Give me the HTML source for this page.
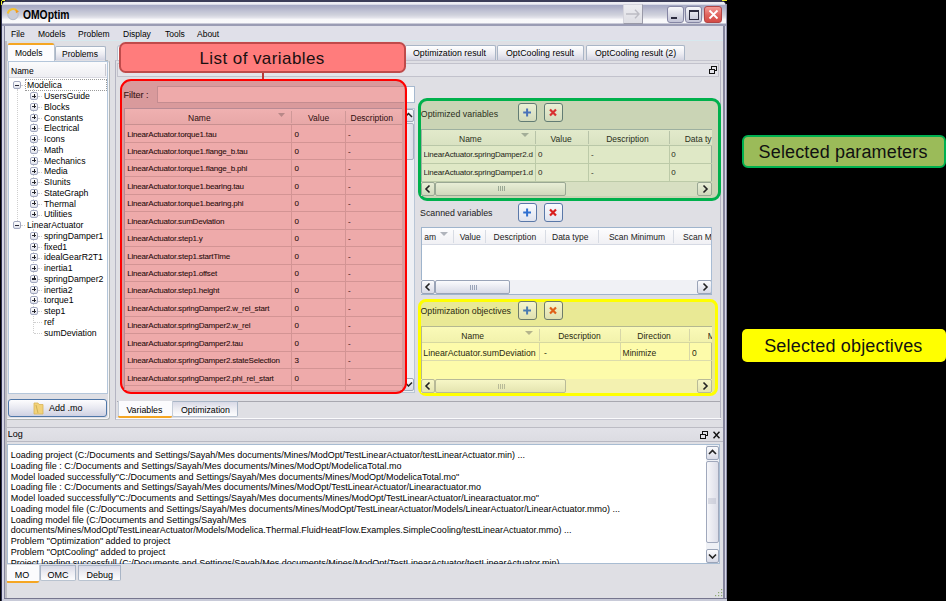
<!DOCTYPE html>
<html><head><meta charset="utf-8">
<style>
*{box-sizing:border-box;margin:0;padding:0}
html,body{width:946px;height:601px;overflow:hidden;background:#000}
body{position:relative;font-family:"Liberation Sans",sans-serif;color:#000}
.a{position:absolute}
.t{position:absolute;white-space:nowrap;font-size:8.5px;line-height:10px;color:#000}
.tab{position:absolute;border:1px solid #a9b5c6;border-bottom:none;background:linear-gradient(#ffffff,#ececf2 55%,#d3d4e2);border-radius:2px 2px 0 0}
.tabsel{position:absolute;border:1px solid #b9c3d0;border-bottom:none;background:#fcfcfe;border-radius:3px 3px 0 0}
.pm{position:absolute;width:8px;height:8px;border:1px solid #a2a8c0;border-radius:2px;background:linear-gradient(#fff,#dfe1ea)}
.pm:before{content:"";position:absolute;left:1px;top:2.5px;width:4px;height:1.2px;background:#2a2a38}
.pm.p:after{content:"";position:absolute;left:2.5px;top:0.5px;width:1px;height:4px;background:#222}
.dl{position:absolute;border-left:1px dotted #cfcfcf;width:0}
.dh{position:absolute;border-top:1px dotted #cfcfcf;height:0}
</style></head><body>
<!-- window frame -->
<div class="a" style="left:1px;top:0;width:726px;height:601px;background:#3a3c58;border-radius:7px 7px 0 0"></div>
<div class="a" style="left:2px;top:1px;width:724px;height:600px;background:#d6d6e6;border-radius:6px 6px 0 0"></div>
<div class="a" style="left:4px;top:2px;width:721px;height:597px;background:#84849c;border-radius:5px 5px 0 0"></div>
<div class="a" style="left:726px;top:4px;width:1px;height:597px;background:#9090a8"></div>
<div class="a" style="left:2px;top:599px;width:724px;height:2px;background:#c8cad8"></div>
<div class="a" style="left:5px;top:2px;width:718px;height:596px;background:#dfdfe4;border-radius:5px 5px 0 0"></div>
<!-- title bar -->
<div class="a" style="left:2px;top:0px;width:724px;height:26px;border-radius:7px 7px 0 0;background:linear-gradient(#3a3c58 0,#3a3c58 1.5px,#ececf2 2.2px,#eeeef4 4.2px,#a4a8c4 5.2px,#b0b2c8 8px,#c0c2d4 11px,#d0d2dc 15px,#e2e2ea 17.5px,#f8f8fa 19.5px,#fafafc 23px,#9a9cb4 24px,#9a9cb4 25.6px,#e2e4ec 26px)"></div>
<div class="a" style="left:1px;top:0;width:1px;height:601px;background:#2e3050"></div>
<!-- app icon -->
<svg class="a" style="left:6px;top:7px" width="14" height="14" viewBox="0 0 14 14">
  <circle cx="7" cy="7.5" r="5.2" fill="#c9ccd8" stroke="#b5bccb" stroke-width="1"/>
  <path d="M1.8 6.5 A5.3 5.3 0 0 1 11.2 4.2" fill="none" stroke="#f5c12e" stroke-width="2"/>
  <path d="M9.5 2.5 L13 4.5 L10 6.2 Z" fill="#f39a1e"/>
</svg>
<div class="t" style="left:23px;top:8.8px;font-size:12px;line-height:13px;font-weight:bold;color:#000;transform:scaleX(0.86);transform-origin:0 0">OMOptim</div>
<!-- title buttons -->
<div class="a" style="left:623px;top:4px;width:20px;height:20px;background:linear-gradient(#ececf0,#dedee4);border:1px solid #d4d4dc;border-right-color:#9a9aa8;border-bottom-color:#9a9aa8"></div>
<svg class="a" style="left:625px;top:8px" width="16" height="12" viewBox="0 0 16 12"><path d="M1 6 H14 M10 1.8 L14 6 L10 10.2" stroke="#bcbcc4" stroke-width="1.4" fill="none"/></svg>
<div class="a" style="left:666.5px;top:6px;width:17px;height:17px;border:1px solid #8586a4;border-radius:3px;background:linear-gradient(#f8f8fb,#d6d7e3 60%,#c2c3d6)"></div>
<div class="a" style="left:670.5px;top:17px;width:6px;height:2px;background:#2c2c40"></div>
<div class="a" style="left:685.4px;top:6px;width:17px;height:17px;border:1px solid #8586a4;border-radius:3px;background:linear-gradient(#f8f8fb,#d6d7e3 60%,#c2c3d6)"></div>
<div class="a" style="left:689px;top:9.6px;width:10px;height:10px;border:1px solid #2c2c40;border-top-width:2px"></div>
<div class="a" style="left:704.4px;top:6px;width:17.4px;height:17px;border:1px solid #b04545;border-radius:3px;background:linear-gradient(#f39a95,#e0625c 55%,#d34a45)"></div>
<svg class="a" style="left:704.6px;top:6px" width="17" height="17" viewBox="0 0 17 17"><path d="M4.5 4.5 L12.5 12.5 M12.5 4.5 L4.5 12.5" stroke="#fff" stroke-width="1.8"/></svg>
<div class="a" style="left:2px;top:0;width:3px;height:1px;background:#ecec30"></div>
<div class="a" style="left:1px;top:1px;width:1px;height:4px;background:#ecec30"></div>
<div class="a" style="left:722px;top:0;width:5px;height:1.2px;background:#ecec30"></div>
<!-- menu bar -->
<div class="a" style="left:5px;top:26px;width:718px;height:15px;background:#e0e0e9;border-bottom:1px solid #d6e8ee"></div>
<div class="t" style="left:11px;top:29px">File</div>
<div class="t" style="left:38px;top:29px">Models</div>
<div class="t" style="left:78px;top:29px">Problem</div>
<div class="t" style="left:123px;top:29px">Display</div>
<div class="t" style="left:165px;top:29px">Tools</div>
<div class="t" style="left:197px;top:29px">About</div>
<!-- LEFT DOCK -->
<div class="tab" style="left:55px;top:45.7px;width:50.5px;height:14.3px"></div>
<div class="t" style="left:62px;top:49px">Problems</div>
<div class="tabsel" style="left:7px;top:43px;width:48px;height:18px"></div>
<div class="a" style="left:8px;top:43px;width:46px;height:2px;background:#f5a623;border-radius:2px 2px 0 0"></div>
<div class="t" style="left:15px;top:48px">Models</div>
<div class="a" style="left:5px;top:59.6px;width:105.4px;height:360.4px;border:1px solid #b2b6b6;border-top-color:transparent;border-radius:0 3px 3px 3px;box-shadow:inset -1px -1px 0 #f6f6f8"></div>
<div class="a" style="left:105px;top:59.6px;width:3px;height:1px;background:#b2b6b6"></div>
<div class="a" style="left:7.5px;top:61px;width:100.5px;height:333px;background:#fff;border:1px solid #b4c6da"></div>
<div class="a" style="left:9px;top:62px;width:98px;height:16px;background:linear-gradient(#fbfbfc,#eeeef2);border-bottom:1px solid #d8d8e0"></div>
<div class="a" style="left:105px;top:64px;width:1px;height:12px;background:#c8c8d0"></div>
<div class="t" style="left:11px;top:66px">Name</div>
<div class="dl" style="left:17px;top:89.4px;height:131.9px"></div>
<div class="dl" style="left:33px;top:89.4px;height:125.1px"></div>
<div class="dl" style="left:33px;top:229.3px;height:103.6px"></div>
<div class="pm" style="left:13px;top:81.2px"></div>
<div class="dh" style="left:21px;top:85.4px;width:4px"></div>
<div class="t" style="left:27px;top:80.2px;font-size:8.7px">Modelica</div>
<div class="pm p" style="left:30px;top:92.0px"></div>
<div class="dh" style="left:38px;top:96.2px;width:4px"></div>
<div class="t" style="left:44px;top:91.0px;font-size:8.7px">UsersGuide</div>
<div class="pm p" style="left:30px;top:102.7px"></div>
<div class="dh" style="left:38px;top:106.9px;width:4px"></div>
<div class="t" style="left:44px;top:101.7px;font-size:8.7px">Blocks</div>
<div class="pm p" style="left:30px;top:113.5px"></div>
<div class="dh" style="left:38px;top:117.7px;width:4px"></div>
<div class="t" style="left:44px;top:112.5px;font-size:8.7px">Constants</div>
<div class="pm p" style="left:30px;top:124.2px"></div>
<div class="dh" style="left:38px;top:128.4px;width:4px"></div>
<div class="t" style="left:44px;top:123.2px;font-size:8.7px">Electrical</div>
<div class="pm p" style="left:30px;top:135.0px"></div>
<div class="dh" style="left:38px;top:139.2px;width:4px"></div>
<div class="t" style="left:44px;top:134.0px;font-size:8.7px">Icons</div>
<div class="pm p" style="left:30px;top:145.8px"></div>
<div class="dh" style="left:38px;top:150.0px;width:4px"></div>
<div class="t" style="left:44px;top:144.8px;font-size:8.7px">Math</div>
<div class="pm p" style="left:30px;top:156.5px"></div>
<div class="dh" style="left:38px;top:160.7px;width:4px"></div>
<div class="t" style="left:44px;top:155.5px;font-size:8.7px">Mechanics</div>
<div class="pm p" style="left:30px;top:167.3px"></div>
<div class="dh" style="left:38px;top:171.5px;width:4px"></div>
<div class="t" style="left:44px;top:166.3px;font-size:8.7px">Media</div>
<div class="pm p" style="left:30px;top:178.0px"></div>
<div class="dh" style="left:38px;top:182.2px;width:4px"></div>
<div class="t" style="left:44px;top:177.0px;font-size:8.7px">SIunits</div>
<div class="pm p" style="left:30px;top:188.8px"></div>
<div class="dh" style="left:38px;top:193.0px;width:4px"></div>
<div class="t" style="left:44px;top:187.8px;font-size:8.7px">StateGraph</div>
<div class="pm p" style="left:30px;top:199.6px"></div>
<div class="dh" style="left:38px;top:203.8px;width:4px"></div>
<div class="t" style="left:44px;top:198.6px;font-size:8.7px">Thermal</div>
<div class="pm p" style="left:30px;top:210.3px"></div>
<div class="dh" style="left:38px;top:214.5px;width:4px"></div>
<div class="t" style="left:44px;top:209.3px;font-size:8.7px">Utilities</div>
<div class="pm" style="left:13px;top:221.1px"></div>
<div class="dh" style="left:21px;top:225.3px;width:4px"></div>
<div class="t" style="left:27px;top:220.1px;font-size:8.7px">LinearActuator</div>
<div class="pm p" style="left:30px;top:231.8px"></div>
<div class="dh" style="left:38px;top:236.0px;width:4px"></div>
<div class="t" style="left:44px;top:230.8px;font-size:8.7px">springDamper1</div>
<div class="pm p" style="left:30px;top:242.6px"></div>
<div class="dh" style="left:38px;top:246.8px;width:4px"></div>
<div class="t" style="left:44px;top:241.6px;font-size:8.7px">fixed1</div>
<div class="pm p" style="left:30px;top:253.4px"></div>
<div class="dh" style="left:38px;top:257.6px;width:4px"></div>
<div class="t" style="left:44px;top:252.4px;font-size:8.7px">idealGearR2T1</div>
<div class="pm p" style="left:30px;top:264.1px"></div>
<div class="dh" style="left:38px;top:268.3px;width:4px"></div>
<div class="t" style="left:44px;top:263.1px;font-size:8.7px">inertia1</div>
<div class="pm p" style="left:30px;top:274.9px"></div>
<div class="dh" style="left:38px;top:279.1px;width:4px"></div>
<div class="t" style="left:44px;top:273.9px;font-size:8.7px">springDamper2</div>
<div class="pm p" style="left:30px;top:285.6px"></div>
<div class="dh" style="left:38px;top:289.8px;width:4px"></div>
<div class="t" style="left:44px;top:284.6px;font-size:8.7px">inertia2</div>
<div class="pm p" style="left:30px;top:296.4px"></div>
<div class="dh" style="left:38px;top:300.6px;width:4px"></div>
<div class="t" style="left:44px;top:295.4px;font-size:8.7px">torque1</div>
<div class="pm p" style="left:30px;top:307.2px"></div>
<div class="dh" style="left:38px;top:311.4px;width:4px"></div>
<div class="t" style="left:44px;top:306.2px;font-size:8.7px">step1</div>
<div class="dh" style="left:34px;top:322.1px;width:8px"></div>
<div class="t" style="left:44px;top:316.9px;font-size:8.7px">ref</div>
<div class="dh" style="left:34px;top:332.9px;width:8px"></div>
<div class="t" style="left:44px;top:327.7px;font-size:8.7px">sumDeviation</div>
<div class="a" style="left:25px;top:79px;width:82px;height:12px;border:1px dotted #9a9a9a"></div>
<!-- Add .mo button -->
<div class="a" style="left:8px;top:399px;width:99px;height:18px;border:1px solid #4f77a8;border-radius:3px;background:linear-gradient(#fdfdfe,#e8e9f1 50%,#cfd1e2)"></div>
<svg class="a" style="left:33px;top:401px" width="12" height="14" viewBox="0 0 12 14"><path d="M1 2 H5 L6 3.5 H10 V13 H1 Z" fill="#f2d27a" stroke="#d9b558" stroke-width="0.8"/><path d="M3 4 L5 12" stroke="#b89a40" stroke-width="0.6"/></svg>
<div class="t" style="left:49px;top:403px;font-size:9px">Add .mo</div>

<div class="a" style="left:117px;top:45px;width:70px;height:16px;background:#fbfbfd;border:1px solid #b9c3d0;border-bottom:none;border-radius:3px 3px 0 0"></div>
<div class="tab" style="left:405px;top:45px;width:91px;height:15px"></div>
<div class="t" style="left:413px;top:48px;font-size:8.8px;color:#000;">Optimization result</div>
<div class="tab" style="left:497px;top:45px;width:87px;height:15px"></div>
<div class="t" style="left:506px;top:48px;font-size:8.8px;color:#000;">OptCooling result</div>
<div class="tab" style="left:586px;top:45px;width:99px;height:15px"></div>
<div class="t" style="left:595px;top:48px;font-size:8.8px;color:#000;">OptCooling result (2)</div>
<div class="a" style="left:115px;top:60px;width:605.5px;height:360px;border:1px solid #b4b4c2;border-bottom-color:#c8c8d2;border-top-color:#c4c4ce"></div>
<div class="a" style="left:117px;top:63px;width:602px;height:14px;border:1px solid #c2c2cc;background:#e4e4ea"></div>
<svg class="a" style="left:709px;top:66px" width="8" height="8" viewBox="0 0 8 8"><rect x="2.5" y="0.5" width="5" height="4" fill="#e4e4ea" stroke="#111" stroke-width="1"/><rect x="0.5" y="3.5" width="5" height="4" fill="#e4e4ea" stroke="#111" stroke-width="1"/></svg>
<div class="a" style="left:157px;top:86px;width:258px;height:17px;background:#fff;border:1px solid #a6b9cf"></div>
<div class="a" style="left:402px;top:108px;width:13px;height:285px;background:#eef0f4;border:1px solid #b9c6d6"></div>
<div class="a" style="left:403px;top:109px;width:11px;height:13px;background:linear-gradient(#fbfbfd,#d8dae6);border:1px solid #a0a8b8;border-radius:2px"></div>
<svg class="a" style="left:404px;top:112px" width="9" height="6" viewBox="0 0 9 6"><path d="M1 5 L4.5 1.5 L8 5" stroke="#222" stroke-width="1.5" fill="none"/></svg>
<div class="a" style="left:403px;top:123px;width:11px;height:37px;background:linear-gradient(90deg,#f4f4f8,#dcdde8);border:1px solid #a8b0c0;border-radius:2px"></div>
<div class="a" style="left:403px;top:378px;width:11px;height:13px;background:linear-gradient(#fbfbfd,#d8dae6);border:1px solid #a0a8b8;border-radius:2px"></div>
<svg class="a" style="left:404px;top:381px" width="9" height="6" viewBox="0 0 9 6"><path d="M1 1.5 L4.5 5 L8 1.5" stroke="#222" stroke-width="1.5" fill="none"/></svg>
<div class="a" style="left:119.5px;top:79px;width:287px;height:314.5px;background:#d99a9c;border:2.7px solid #ff0000;border-radius:11px"></div>
<div class="t" style="left:123.5px;top:90px;font-size:9px;color:#3a1414;-webkit-text-stroke:0.1px #3a1414">Filter :</div>
<div class="a" style="left:157px;top:86px;width:247px;height:17px;background:#eeaaaa;border:1px solid #c48c90;border-right:none"></div>
<div class="a" style="left:124px;top:108px;width:278px;height:282px;background:#eeaaaa;border:1px solid #b88a94;border-right:none;border-bottom:none"></div>
<div class="a" style="left:125px;top:109px;width:277px;height:16px;background:linear-gradient(#efb0b0,#e8a8a8);border-bottom:1px solid #c89090"></div>
<div class="a" style="left:291px;top:111px;width:1px;height:12px;background:#cf9898"></div>
<div class="a" style="left:344.5px;top:111px;width:1px;height:12px;background:#cf9898"></div>
<div class="t" style="left:188px;top:112.5px;font-size:8.5px;color:#2e0e0e;">Name</div>
<div class="t" style="left:308px;top:112.5px;font-size:8.5px;color:#2e0e0e;">Value</div>
<div class="t" style="left:350.5px;top:112.5px;font-size:8.5px;color:#2e0e0e;">Description</div>
<svg class="a" style="left:278px;top:113px" width="7" height="4" viewBox="0 0 7 4"><path d="M0 0 H7 L3.5 4 Z" fill="#b88888"/></svg>
<div class="a" style="left:125px;top:141.5px;width:277px;height:1px;background:#d39494"></div>
<div class="t" style="left:127.3px;top:129.6px;font-size:8px;color:#2a0c0c;letter-spacing:-0.2px;-webkit-text-stroke:0.08px #2a0c0c">LinearActuator.torque1.tau</div>
<div class="t" style="left:294.5px;top:129.6px;font-size:8px;color:#2a0c0c;-webkit-text-stroke:0.08px #2a0c0c">0</div>
<div class="t" style="left:348px;top:129.6px;font-size:8px;color:#2a0c0c;-webkit-text-stroke:0.08px #2a0c0c">-</div>
<div class="a" style="left:125px;top:158.9px;width:277px;height:1px;background:#d39494"></div>
<div class="t" style="left:127.3px;top:147.0px;font-size:8px;color:#2a0c0c;letter-spacing:-0.2px;-webkit-text-stroke:0.08px #2a0c0c">LinearActuator.torque1.flange_b.tau</div>
<div class="t" style="left:294.5px;top:147.0px;font-size:8px;color:#2a0c0c;-webkit-text-stroke:0.08px #2a0c0c">0</div>
<div class="t" style="left:348px;top:147.0px;font-size:8px;color:#2a0c0c;-webkit-text-stroke:0.08px #2a0c0c">-</div>
<div class="a" style="left:125px;top:176.4px;width:277px;height:1px;background:#d39494"></div>
<div class="t" style="left:127.3px;top:164.4px;font-size:8px;color:#2a0c0c;letter-spacing:-0.2px;-webkit-text-stroke:0.08px #2a0c0c">LinearActuator.torque1.flange_b.phi</div>
<div class="t" style="left:294.5px;top:164.4px;font-size:8px;color:#2a0c0c;-webkit-text-stroke:0.08px #2a0c0c">0</div>
<div class="t" style="left:348px;top:164.4px;font-size:8px;color:#2a0c0c;-webkit-text-stroke:0.08px #2a0c0c">-</div>
<div class="a" style="left:125px;top:193.8px;width:277px;height:1px;background:#d39494"></div>
<div class="t" style="left:127.3px;top:181.9px;font-size:8px;color:#2a0c0c;letter-spacing:-0.2px;-webkit-text-stroke:0.08px #2a0c0c">LinearActuator.torque1.bearing.tau</div>
<div class="t" style="left:294.5px;top:181.9px;font-size:8px;color:#2a0c0c;-webkit-text-stroke:0.08px #2a0c0c">0</div>
<div class="t" style="left:348px;top:181.9px;font-size:8px;color:#2a0c0c;-webkit-text-stroke:0.08px #2a0c0c">-</div>
<div class="a" style="left:125px;top:211.2px;width:277px;height:1px;background:#d39494"></div>
<div class="t" style="left:127.3px;top:199.3px;font-size:8px;color:#2a0c0c;letter-spacing:-0.2px;-webkit-text-stroke:0.08px #2a0c0c">LinearActuator.torque1.bearing.phi</div>
<div class="t" style="left:294.5px;top:199.3px;font-size:8px;color:#2a0c0c;-webkit-text-stroke:0.08px #2a0c0c">0</div>
<div class="t" style="left:348px;top:199.3px;font-size:8px;color:#2a0c0c;-webkit-text-stroke:0.08px #2a0c0c">-</div>
<div class="a" style="left:125px;top:228.6px;width:277px;height:1px;background:#d39494"></div>
<div class="t" style="left:127.3px;top:216.7px;font-size:8px;color:#2a0c0c;letter-spacing:-0.2px;-webkit-text-stroke:0.08px #2a0c0c">LinearActuator.sumDeviation</div>
<div class="t" style="left:294.5px;top:216.7px;font-size:8px;color:#2a0c0c;-webkit-text-stroke:0.08px #2a0c0c">0</div>
<div class="t" style="left:348px;top:216.7px;font-size:8px;color:#2a0c0c;-webkit-text-stroke:0.08px #2a0c0c">-</div>
<div class="a" style="left:125px;top:246.0px;width:277px;height:1px;background:#d39494"></div>
<div class="t" style="left:127.3px;top:234.1px;font-size:8px;color:#2a0c0c;letter-spacing:-0.2px;-webkit-text-stroke:0.08px #2a0c0c">LinearActuator.step1.y</div>
<div class="t" style="left:294.5px;top:234.1px;font-size:8px;color:#2a0c0c;-webkit-text-stroke:0.08px #2a0c0c">0</div>
<div class="t" style="left:348px;top:234.1px;font-size:8px;color:#2a0c0c;-webkit-text-stroke:0.08px #2a0c0c">-</div>
<div class="a" style="left:125px;top:263.5px;width:277px;height:1px;background:#d39494"></div>
<div class="t" style="left:127.3px;top:251.5px;font-size:8px;color:#2a0c0c;letter-spacing:-0.2px;-webkit-text-stroke:0.08px #2a0c0c">LinearActuator.step1.startTime</div>
<div class="t" style="left:294.5px;top:251.5px;font-size:8px;color:#2a0c0c;-webkit-text-stroke:0.08px #2a0c0c">0</div>
<div class="t" style="left:348px;top:251.5px;font-size:8px;color:#2a0c0c;-webkit-text-stroke:0.08px #2a0c0c">-</div>
<div class="a" style="left:125px;top:280.9px;width:277px;height:1px;background:#d39494"></div>
<div class="t" style="left:127.3px;top:269.0px;font-size:8px;color:#2a0c0c;letter-spacing:-0.2px;-webkit-text-stroke:0.08px #2a0c0c">LinearActuator.step1.offset</div>
<div class="t" style="left:294.5px;top:269.0px;font-size:8px;color:#2a0c0c;-webkit-text-stroke:0.08px #2a0c0c">0</div>
<div class="t" style="left:348px;top:269.0px;font-size:8px;color:#2a0c0c;-webkit-text-stroke:0.08px #2a0c0c">-</div>
<div class="a" style="left:125px;top:298.3px;width:277px;height:1px;background:#d39494"></div>
<div class="t" style="left:127.3px;top:286.4px;font-size:8px;color:#2a0c0c;letter-spacing:-0.2px;-webkit-text-stroke:0.08px #2a0c0c">LinearActuator.step1.height</div>
<div class="t" style="left:294.5px;top:286.4px;font-size:8px;color:#2a0c0c;-webkit-text-stroke:0.08px #2a0c0c">0</div>
<div class="t" style="left:348px;top:286.4px;font-size:8px;color:#2a0c0c;-webkit-text-stroke:0.08px #2a0c0c">-</div>
<div class="a" style="left:125px;top:315.7px;width:277px;height:1px;background:#d39494"></div>
<div class="t" style="left:127.3px;top:303.8px;font-size:8px;color:#2a0c0c;letter-spacing:-0.2px;-webkit-text-stroke:0.08px #2a0c0c">LinearActuator.springDamper2.w_rel_start</div>
<div class="t" style="left:294.5px;top:303.8px;font-size:8px;color:#2a0c0c;-webkit-text-stroke:0.08px #2a0c0c">0</div>
<div class="t" style="left:348px;top:303.8px;font-size:8px;color:#2a0c0c;-webkit-text-stroke:0.08px #2a0c0c">-</div>
<div class="a" style="left:125px;top:333.1px;width:277px;height:1px;background:#d39494"></div>
<div class="t" style="left:127.3px;top:321.2px;font-size:8px;color:#2a0c0c;letter-spacing:-0.2px;-webkit-text-stroke:0.08px #2a0c0c">LinearActuator.springDamper2.w_rel</div>
<div class="t" style="left:294.5px;top:321.2px;font-size:8px;color:#2a0c0c;-webkit-text-stroke:0.08px #2a0c0c">0</div>
<div class="t" style="left:348px;top:321.2px;font-size:8px;color:#2a0c0c;-webkit-text-stroke:0.08px #2a0c0c">-</div>
<div class="a" style="left:125px;top:350.6px;width:277px;height:1px;background:#d39494"></div>
<div class="t" style="left:127.3px;top:338.6px;font-size:8px;color:#2a0c0c;letter-spacing:-0.2px;-webkit-text-stroke:0.08px #2a0c0c">LinearActuator.springDamper2.tau</div>
<div class="t" style="left:294.5px;top:338.6px;font-size:8px;color:#2a0c0c;-webkit-text-stroke:0.08px #2a0c0c">0</div>
<div class="t" style="left:348px;top:338.6px;font-size:8px;color:#2a0c0c;-webkit-text-stroke:0.08px #2a0c0c">-</div>
<div class="a" style="left:125px;top:368.0px;width:277px;height:1px;background:#d39494"></div>
<div class="t" style="left:127.3px;top:356.1px;font-size:8px;color:#2a0c0c;letter-spacing:-0.2px;-webkit-text-stroke:0.08px #2a0c0c">LinearActuator.springDamper2.stateSelection</div>
<div class="t" style="left:294.5px;top:356.1px;font-size:8px;color:#2a0c0c;-webkit-text-stroke:0.08px #2a0c0c">3</div>
<div class="t" style="left:348px;top:356.1px;font-size:8px;color:#2a0c0c;-webkit-text-stroke:0.08px #2a0c0c">-</div>
<div class="a" style="left:125px;top:385.4px;width:277px;height:1px;background:#d39494"></div>
<div class="t" style="left:127.3px;top:373.5px;font-size:8px;color:#2a0c0c;letter-spacing:-0.2px;-webkit-text-stroke:0.08px #2a0c0c">LinearActuator.springDamper2.phi_rel_start</div>
<div class="t" style="left:294.5px;top:373.5px;font-size:8px;color:#2a0c0c;-webkit-text-stroke:0.08px #2a0c0c">0</div>
<div class="t" style="left:348px;top:373.5px;font-size:8px;color:#2a0c0c;-webkit-text-stroke:0.08px #2a0c0c">-</div>
<div class="a" style="left:291px;top:125px;width:1px;height:265px;background:#d39494"></div>
<div class="a" style="left:344.5px;top:125px;width:1px;height:265px;background:#d39494"></div>
<div class="a" style="left:119.3px;top:41.6px;width:286.8px;height:31.6px;background:#ff7c7c;border:2px solid #bf4b4b;border-radius:6.5px"></div>
<div class="t" style="left:199.5px;top:48.6px;font-size:17px;color:#1a1010;line-height:20px;letter-spacing:0.42px">List of variables</div>
<div class="a" style="left:262px;top:73px;width:2px;height:6px;background:#b83a3a"></div><div class="a" style="left:417.5px;top:97.7px;width:303px;height:103px;background:#cad4b5;border:3px solid #00b04c;border-radius:9px"></div>
<div class="t" style="left:420.8px;top:108.5px;font-size:8.8px;color:#2a3020;">Optimized variables</div>
<div class="a" style="left:518px;top:103px;width:19px;height:19px;border:1.5px solid #627c74;border-radius:3px;background:linear-gradient(#eaf0d4,#d2dabc)"></div>
<div class="a" style="left:544px;top:103px;width:19px;height:19px;border:1.5px solid #627c74;border-radius:3px;background:linear-gradient(#eaf0d4,#d2dabc)"></div>
<svg class="a" style="left:518px;top:103px" width="19" height="19" viewBox="0 0 19 19"><path d="M5.2 9.6 H13 M9.1 5.6 V13.6" stroke="#4a72b8" stroke-width="2"/></svg>
<svg class="a" style="left:544px;top:103px" width="19" height="19" viewBox="0 0 19 19"><path d="M6 6.5 L12 12.5 M12 6.5 L6 12.5" stroke="#d83030" stroke-width="2.2"/></svg>
<div class="a" style="left:420.8px;top:128.5px;width:291px;height:67.5px;background:#dfe8c6;border:1px solid #9db0a0;border-bottom:none"></div>
<div class="a" style="left:421.8px;top:129.5px;width:290px;height:16px;background:linear-gradient(#e2eacb,#d9e2c2);border-bottom:1px solid #b9c7a8"></div>
<div class="t" style="left:459px;top:133.5px;font-size:8.5px;color:#2a3020;">Name</div>
<svg class="a" style="left:521px;top:133px" width="8" height="4" viewBox="0 0 8 4"><path d="M0 0 H8 L4 4 Z" fill="#a3ae98"/></svg>
<div class="t" style="left:550.5px;top:133.5px;font-size:8.5px;color:#2a3020;">Value</div>
<div class="t" style="left:606.2px;top:133.5px;font-size:8.5px;color:#2a3020;">Description</div>
<div class="t" style="left:684.7px;top:133.5px;font-size:8.5px;color:#2a3020;">Data ty</div>
<div class="a" style="left:535.2px;top:131px;width:1px;height:13px;background:#b7c3a8"></div>
<div class="a" style="left:535.2px;top:145.5px;width:1px;height:36px;background:#bccaa8"></div>
<div class="a" style="left:587.6px;top:131px;width:1px;height:13px;background:#b7c3a8"></div>
<div class="a" style="left:587.6px;top:145.5px;width:1px;height:36px;background:#bccaa8"></div>
<div class="a" style="left:668.8px;top:131px;width:1px;height:13px;background:#b7c3a8"></div>
<div class="a" style="left:668.8px;top:145.5px;width:1px;height:36px;background:#bccaa8"></div>
<div class="a" style="left:421.8px;top:163px;width:290px;height:1px;background:#bccaa8"></div>
<div class="a" style="left:421.8px;top:181px;width:290px;height:1px;background:#bccaa8"></div>
<div class="t" style="left:423.5px;top:149.9px;font-size:8px;color:#1e2418;letter-spacing:-0.2px;width:111px;overflow:hidden">LinearActuator.springDamper2.d</div>
<div class="t" style="left:538px;top:149.9px;font-size:8px;color:#1e2418;">0</div>
<div class="t" style="left:591px;top:149.9px;font-size:8px;color:#1e2418;">-</div>
<div class="t" style="left:671.2px;top:149.9px;font-size:8px;color:#1e2418;">0</div>
<div class="t" style="left:423.5px;top:167.70000000000002px;font-size:8px;color:#1e2418;letter-spacing:-0.2px;width:111px;overflow:hidden">LinearActuator.springDamper1.d</div>
<div class="t" style="left:538px;top:167.70000000000002px;font-size:8px;color:#1e2418;">0</div>
<div class="t" style="left:591px;top:167.70000000000002px;font-size:8px;color:#1e2418;">-</div>
<div class="t" style="left:671.2px;top:167.70000000000002px;font-size:8px;color:#1e2418;">0</div>
<div class="a" style="left:421px;top:181.8px;width:291px;height:14px;background:#d7dfc2"></div>
<div class="a" style="left:421px;top:181.8px;width:14px;height:14px;border:1px solid #9aa894;border-radius:2px;background:linear-gradient(#e8eed6,#d0d8bc)"></div>
<svg class="a" style="left:421px;top:181.8px" width="14" height="14" viewBox="0 0 14 14"><path d="M8.5 3.5 L5 7 L8.5 10.5" stroke="#222" stroke-width="1.6" fill="none"/></svg>
<div class="a" style="left:435px;top:181.8px;width:131px;height:14px;border:1px solid #9aa894;border-radius:2px;background:linear-gradient(#e8eed6,#d0d8bc)"></div>
<div class="a" style="left:497.5px;top:186.3px;width:1px;height:5px;background:#9aa894"></div>
<div class="a" style="left:499.5px;top:186.3px;width:1px;height:5px;background:#9aa894"></div>
<div class="a" style="left:501.5px;top:186.3px;width:1px;height:5px;background:#9aa894"></div>
<div class="a" style="left:503.5px;top:186.3px;width:1px;height:5px;background:#9aa894"></div>
<div class="a" style="left:697px;top:181.8px;width:15px;height:14px;border:1px solid #9aa894;border-radius:2px;background:linear-gradient(#e8eed6,#d0d8bc)"></div>
<svg class="a" style="left:698px;top:181.8px" width="14" height="14" viewBox="0 0 14 14"><path d="M5.5 3.5 L9 7 L5.5 10.5" stroke="#222" stroke-width="1.6" fill="none"/></svg>
<div class="t" style="left:420.1px;top:207.5px;font-size:8.8px;color:#1a1a1a;">Scanned variables</div>
<div class="a" style="left:518px;top:202.5px;width:19px;height:19px;border:1.5px solid #5a78a8;border-radius:3px;background:linear-gradient(#fafbfe,#dfe3ee)"></div>
<div class="a" style="left:544px;top:202.5px;width:19px;height:19px;border:1.5px solid #5a78a8;border-radius:3px;background:linear-gradient(#fafbfe,#dfe3ee)"></div>
<svg class="a" style="left:518px;top:202.5px" width="19" height="19" viewBox="0 0 19 19"><path d="M5.2 9.6 H13 M9.1 5.6 V13.6" stroke="#2f6fd0" stroke-width="2"/></svg>
<svg class="a" style="left:544px;top:202.5px" width="19" height="19" viewBox="0 0 19 19"><path d="M6 6.5 L12 12.5 M12 6.5 L6 12.5" stroke="#d81e1e" stroke-width="2.2"/></svg>
<div class="a" style="left:420.8px;top:227.3px;width:291px;height:66.3px;background:#fff;border:1px solid #9fb4cc"></div>
<div class="a" style="left:421.8px;top:228.3px;width:290px;height:16.4px;background:linear-gradient(#fdfdfe,#f0f0f4);border-bottom:1px solid #d6dae4"></div>
<div class="t" style="left:424.2px;top:232px;font-size:8.5px;color:#1a1a1a;">am</div>
<div class="t" style="left:459.7px;top:232px;font-size:8.5px;color:#1a1a1a;">Value</div>
<div class="t" style="left:493.6px;top:232px;font-size:8.5px;color:#1a1a1a;">Description</div>
<div class="t" style="left:552px;top:232px;font-size:8.5px;color:#1a1a1a;">Data type</div>
<div class="t" style="left:608.9px;top:232px;font-size:8.5px;color:#1a1a1a;">Scan Minimum</div>
<div class="t" style="left:683px;top:232px;font-size:8.5px;color:#1a1a1a;">Scan M</div>
<svg class="a" style="left:440px;top:232px" width="8" height="4" viewBox="0 0 8 4"><path d="M0 0 H8 L4 4 Z" fill="#b0b4bc"/></svg>
<div class="a" style="left:453.3px;top:230px;width:1px;height:13px;background:#d8dce4"></div>
<div class="a" style="left:485.1px;top:230px;width:1px;height:13px;background:#d8dce4"></div>
<div class="a" style="left:545.3px;top:230px;width:1px;height:13px;background:#d8dce4"></div>
<div class="a" style="left:597.8px;top:230px;width:1px;height:13px;background:#d8dce4"></div>
<div class="a" style="left:672.9px;top:230px;width:1px;height:13px;background:#d8dce4"></div>
<div class="a" style="left:421.8px;top:244.7px;width:290px;height:48px;background:#fff;overflow:hidden"></div>
<div class="t" style="left:700px;top:232px;font-size:8.5px;color:#000;"></div>
<div class="a" style="left:421px;top:280.2px;width:291px;height:14px;background:#f0f1f5"></div>
<div class="a" style="left:421px;top:280.2px;width:14px;height:14px;border:1px solid #9aa4b8;border-radius:2px;background:linear-gradient(#fbfbfd,#d8dae6)"></div>
<svg class="a" style="left:421px;top:280.2px" width="14" height="14" viewBox="0 0 14 14"><path d="M8.5 3.5 L5 7 L8.5 10.5" stroke="#222" stroke-width="1.6" fill="none"/></svg>
<div class="a" style="left:435px;top:280.2px;width:75px;height:14px;border:1px solid #9aa4b8;border-radius:2px;background:linear-gradient(#fbfbfd,#d8dae6)"></div>
<div class="a" style="left:469.5px;top:284.7px;width:1px;height:5px;background:#9aa4b8"></div>
<div class="a" style="left:471.5px;top:284.7px;width:1px;height:5px;background:#9aa4b8"></div>
<div class="a" style="left:473.5px;top:284.7px;width:1px;height:5px;background:#9aa4b8"></div>
<div class="a" style="left:475.5px;top:284.7px;width:1px;height:5px;background:#9aa4b8"></div>
<div class="a" style="left:697px;top:280.2px;width:15px;height:14px;border:1px solid #9aa4b8;border-radius:2px;background:linear-gradient(#fbfbfd,#d8dae6)"></div>
<svg class="a" style="left:698px;top:280.2px" width="14" height="14" viewBox="0 0 14 14"><path d="M5.5 3.5 L9 7 L5.5 10.5" stroke="#222" stroke-width="1.6" fill="none"/></svg>
<div class="a" style="left:420.8px;top:293.6px;width:291px;height:1px;background:#9fb4cc"></div>
<div class="a" style="left:711px;top:227.3px;width:1px;height:67px;background:#a8bcd4"></div>
<div class="a" style="left:418.2px;top:298.9px;width:300px;height:97.1px;background:#e9e995;border:3px solid #ffff00;border-radius:8px"></div>
<div class="t" style="left:420.5px;top:306.3px;font-size:8.8px;color:#2a2a10;">Optimization objectives</div>
<div class="a" style="left:518px;top:301.2px;width:19px;height:19px;border:1.5px solid #6e7c6a;border-radius:3px;background:linear-gradient(#f6f6cc,#e0e0b0)"></div>
<div class="a" style="left:544px;top:301.2px;width:19px;height:19px;border:1.5px solid #6e7c6a;border-radius:3px;background:linear-gradient(#f6f6cc,#e0e0b0)"></div>
<svg class="a" style="left:518px;top:301.2px" width="19" height="19" viewBox="0 0 19 19"><path d="M5.2 9.6 H13 M9.1 5.6 V13.6" stroke="#4a7ab0" stroke-width="2"/></svg>
<svg class="a" style="left:544px;top:301.2px" width="19" height="19" viewBox="0 0 19 19"><path d="M6 6.5 L12 12.5 M12 6.5 L6 12.5" stroke="#e06018" stroke-width="2.2"/></svg>
<div class="a" style="left:420.5px;top:326.1px;width:291.4px;height:66.5px;background:#fdfbaa;border:1px solid #b4b890;border-bottom:none"></div>
<div class="a" style="left:421.5px;top:327.1px;width:290.4px;height:15.5px;background:linear-gradient(#fafab8,#f2f2ac);border-bottom:1px solid #d6d8a0"></div>
<div class="t" style="left:461.3px;top:331px;font-size:8.5px;color:#2a2a10;">Name</div>
<svg class="a" style="left:525px;top:331px" width="8" height="4" viewBox="0 0 8 4"><path d="M0 0 H8 L4 4 Z" fill="#b4b48c"/></svg>
<div class="t" style="left:558.2px;top:331px;font-size:8.5px;color:#2a2a10;">Description</div>
<div class="t" style="left:637.3px;top:331px;font-size:8.5px;color:#2a2a10;">Direction</div>
<div class="t" style="left:707.7px;top:331px;font-size:8.5px;color:#2a2a10;width:4px;overflow:hidden">M</div>
<div class="a" style="left:539.4px;top:329px;width:1px;height:12px;background:#d6d6a8"></div>
<div class="a" style="left:539.4px;top:342.6px;width:1px;height:17.4px;background:#d8d8a8"></div>
<div class="a" style="left:619.7px;top:329px;width:1px;height:12px;background:#d6d6a8"></div>
<div class="a" style="left:619.7px;top:342.6px;width:1px;height:17.4px;background:#d8d8a8"></div>
<div class="a" style="left:689.2px;top:329px;width:1px;height:12px;background:#d6d6a8"></div>
<div class="a" style="left:689.2px;top:342.6px;width:1px;height:17.4px;background:#d8d8a8"></div>
<div class="a" style="left:421.5px;top:360px;width:290.4px;height:1px;background:#dcdcac"></div>
<div class="t" style="left:423.3px;top:348px;font-size:8.8px;color:#2a2a10;">LinearActuator.sumDeviation</div>
<div class="t" style="left:544px;top:348px;font-size:8.5px;color:#2a2a10;">-</div>
<div class="t" style="left:622.6px;top:348px;font-size:8.5px;color:#2a2a10;">Minimize</div>
<div class="t" style="left:692px;top:348px;font-size:8.5px;color:#2a2a10;">0</div>
<div class="a" style="left:421px;top:379.4px;width:291px;height:14px;background:#f3f1b0"></div>
<div class="a" style="left:421px;top:379.4px;width:14px;height:14px;border:1px solid #b8ba98;border-radius:2px;background:linear-gradient(#f6f6c6,#e4e4b0)"></div>
<svg class="a" style="left:421px;top:379.4px" width="14" height="14" viewBox="0 0 14 14"><path d="M8.5 3.5 L5 7 L8.5 10.5" stroke="#222" stroke-width="1.6" fill="none"/></svg>
<div class="a" style="left:435px;top:379.4px;width:131px;height:14px;border:1px solid #b8ba98;border-radius:2px;background:linear-gradient(#f6f6c6,#e4e4b0)"></div>
<div class="a" style="left:497.5px;top:383.9px;width:1px;height:5px;background:#b8ba98"></div>
<div class="a" style="left:499.5px;top:383.9px;width:1px;height:5px;background:#b8ba98"></div>
<div class="a" style="left:501.5px;top:383.9px;width:1px;height:5px;background:#b8ba98"></div>
<div class="a" style="left:503.5px;top:383.9px;width:1px;height:5px;background:#b8ba98"></div>
<div class="a" style="left:697px;top:379.4px;width:15px;height:14px;border:1px solid #b8ba98;border-radius:2px;background:linear-gradient(#f6f6c6,#e4e4b0)"></div>
<svg class="a" style="left:698px;top:379.4px" width="14" height="14" viewBox="0 0 14 14"><path d="M5.5 3.5 L9 7 L5.5 10.5" stroke="#222" stroke-width="1.6" fill="none"/></svg><div class="a" style="left:117px;top:401px;width:603px;height:1px;background:#a8a8b0"></div>
<div class="a" style="left:116px;top:418px;width:605px;height:1px;background:#fbfbfd"></div>
<div class="tab" style="left:172px;top:401px;width:66px;height:15.5px;border-bottom:1px solid #b9c3d0;border-radius:0 0 2px 2px;background:linear-gradient(#d8d9e6,#ececf2 45%,#fdfdfe)"></div>
<div class="t" style="left:181px;top:404.5px;font-size:8.8px;color:#000;">Optimization</div>
<div class="a" style="left:117.5px;top:400.5px;width:55px;height:17px;background:#fbfbfd;border:1px solid #c4ccd8;border-top:none;border-radius:0 0 3px 3px"></div>
<div class="a" style="left:118px;top:415.7px;width:54px;height:2px;background:#f5a623;border-radius:0 0 2px 2px"></div>
<div class="t" style="left:126.4px;top:404.5px;font-size:8.8px;color:#000;">Variables</div>
<div class="a" style="left:5px;top:427px;width:718px;height:15px;background:linear-gradient(#e2e2e8,#dcdce2);border-top:1px solid #bcbcc4;border-bottom:1px solid #b8b8c2"></div>
<div class="t" style="left:7.7px;top:429.4px;font-size:9px;color:#000;">Log</div>
<svg class="a" style="left:700px;top:431px" width="8" height="8" viewBox="0 0 8 8"><rect x="2.5" y="0.5" width="5" height="4" fill="#e2e2e8" stroke="#111" stroke-width="1"/><rect x="0.5" y="3.5" width="5" height="4" fill="#e2e2e8" stroke="#111" stroke-width="1"/></svg>
<svg class="a" style="left:713px;top:431px" width="7" height="8" viewBox="0 0 7 8"><path d="M0.5 0.8 L6.5 7.2 M6.5 0.8 L0.5 7.2" stroke="#111" stroke-width="1.5"/></svg>
<div class="a" style="left:6.6px;top:444.4px;width:713.4px;height:120px;background:#fff;border:1px solid #a8bcd2;overflow:hidden"></div>
<div class="a" style="left:7px;top:445px;width:699px;height:118.5px;overflow:hidden"><div class="t" style="left:3.7px;top:5.00px;font-size:9px;color:#000">Loading project (C:/Documents and Settings/Sayah/Mes documents/Mines/ModOpt/TestLinearActuator/testLinearActuator.min) ...</div><div class="t" style="left:3.7px;top:15.78px;font-size:9px;color:#000">Loading file : C:/Documents and Settings/Sayah/Mes documents/Mines/ModOpt/ModelicaTotal.mo</div><div class="t" style="left:3.7px;top:26.56px;font-size:9px;color:#000">Model loaded successfully&quot;C:/Documents and Settings/Sayah/Mes documents/Mines/ModOpt/ModelicaTotal.mo&quot;</div><div class="t" style="left:3.7px;top:37.34px;font-size:9px;color:#000">Loading file : C:/Documents and Settings/Sayah/Mes documents/Mines/ModOpt/TestLinearActuator/Linearactuator.mo</div><div class="t" style="left:3.7px;top:48.12px;font-size:9px;color:#000">Model loaded successfully&quot;C:/Documents and Settings/Sayah/Mes documents/Mines/ModOpt/TestLinearActuator/Linearactuator.mo&quot;</div><div class="t" style="left:3.7px;top:58.90px;font-size:9px;color:#000">Loading model file (C:/Documents and Settings/Sayah/Mes documents/Mines/ModOpt/TestLinearActuator/Models/LinearActuator/LinearActuator.mmo) ...</div><div class="t" style="left:3.7px;top:69.68px;font-size:9px;color:#000">Loading model file (C:/Documents and Settings/Sayah/Mes</div><div class="t" style="left:3.7px;top:80.46px;font-size:9px;color:#000">documents/Mines/ModOpt/TestLinearActuator/Models/Modelica.Thermal.FluidHeatFlow.Examples.SimpleCooling/testLinearActuator.mmo) ...</div><div class="t" style="left:3.7px;top:91.24px;font-size:9px;color:#000">Problem &quot;Optimization&quot; added to project</div><div class="t" style="left:3.7px;top:102.02px;font-size:9px;color:#000">Problem &quot;OptCooling&quot; added to project</div><div class="t" style="left:3.7px;top:112.80px;font-size:9px;color:#000">Project loading successfull (C:/Documents and Settings/Sayah/Mes documents/Mines/ModOpt/TestLinearActuator/testLinearActuator.min)</div></div>
<div class="a" style="left:706px;top:445px;width:13px;height:118px;background:#eef0f5"></div>
<div class="a" style="left:706px;top:445.5px;width:13px;height:14px;background:linear-gradient(#fbfbfd,#d8dae6);border:1px solid #9aa4b8;border-radius:2px"></div>
<svg class="a" style="left:708px;top:449px" width="9" height="6" viewBox="0 0 9 6"><path d="M1 5 L4.5 1.5 L8 5" stroke="#222" stroke-width="1.6" fill="none"/></svg>
<div class="a" style="left:706px;top:461px;width:13px;height:82px;background:linear-gradient(90deg,#f6f6f9,#dcdde8);border:1px solid #a0a8bc;border-radius:2px"></div>
<svg class="a" style="left:708px;top:498px" width="8" height="6" viewBox="0 0 8 6"><path d="M0 1 H8 M0 3 H8 M0 5 H8" stroke="#b0b4c4" stroke-width="0.8"/></svg>
<div class="a" style="left:706px;top:549px;width:13px;height:14px;background:linear-gradient(#fbfbfd,#d8dae6);border:1px solid #9aa4b8;border-radius:2px"></div>
<svg class="a" style="left:708px;top:553px" width="9" height="6" viewBox="0 0 9 6"><path d="M1 1.5 L4.5 5 L8 1.5" stroke="#222" stroke-width="1.6" fill="none"/></svg>
<div class="tab" style="left:40px;top:565px;width:36px;height:16px;border-bottom:1px solid #b9c3d0;border-radius:0 0 2px 2px;background:linear-gradient(#d8d9e6,#ececf2 45%,#fdfdfe)"></div>
<div class="t" style="left:47.6px;top:569.5px;font-size:9px;color:#000;">OMC</div>
<div class="tab" style="left:78px;top:565px;width:43px;height:16px;border-bottom:1px solid #b9c3d0;border-radius:0 0 2px 2px;background:linear-gradient(#d8d9e6,#ececf2 45%,#fdfdfe)"></div>
<div class="t" style="left:86.5px;top:569.5px;font-size:9px;color:#000;">Debug</div>
<div class="a" style="left:5.5px;top:564.5px;width:34px;height:18px;background:#fbfbfd;border:1px solid #c4ccd8;border-top:none;border-radius:0 0 3px 3px"></div>
<div class="a" style="left:6px;top:580.5px;width:33px;height:2px;background:#f5a623;border-radius:0 0 2px 2px"></div>
<div class="t" style="left:14.8px;top:569.5px;font-size:9px;color:#000;">MO</div>
<div class="a" style="left:4px;top:597.8px;width:723px;height:1.2px;background:#76768e"></div>
<div class="a" style="left:2px;top:599px;width:725px;height:2px;background:#c8cad8"></div>
<svg class="a" style="left:714px;top:588px" width="9" height="9" viewBox="0 0 9 9"><g fill="#8ca870"><rect x="7" y="1" width="1.2" height="1.2"/><rect x="4" y="4" width="1.2" height="1.2"/><rect x="7" y="4" width="1.2" height="1.2"/><rect x="1" y="7" width="1.2" height="1.2"/><rect x="4" y="7" width="1.2" height="1.2"/><rect x="7" y="7" width="1.2" height="1.2"/></g></svg>
<div class="a" style="left:5px;top:41px;width:1.6px;height:557px;background:#bdbdc2"></div>
<div class="a" style="left:742px;top:135px;width:203.5px;height:32.8px;background:#9bbb59;border:2.6px solid #00b050;border-radius:6px"></div>
<div class="t" style="left:758.6px;top:141.6px;font-size:18px;color:#111;line-height:20px;letter-spacing:0.15px">Selected parameters</div>
<div class="a" style="left:742px;top:329.2px;width:203.8px;height:33px;background:#ffff00;border-radius:5px"></div>
<div class="t" style="left:764.2px;top:335.8px;font-size:18px;color:#111;line-height:20px;letter-spacing:0.17px">Selected objectives</div></body></html>
